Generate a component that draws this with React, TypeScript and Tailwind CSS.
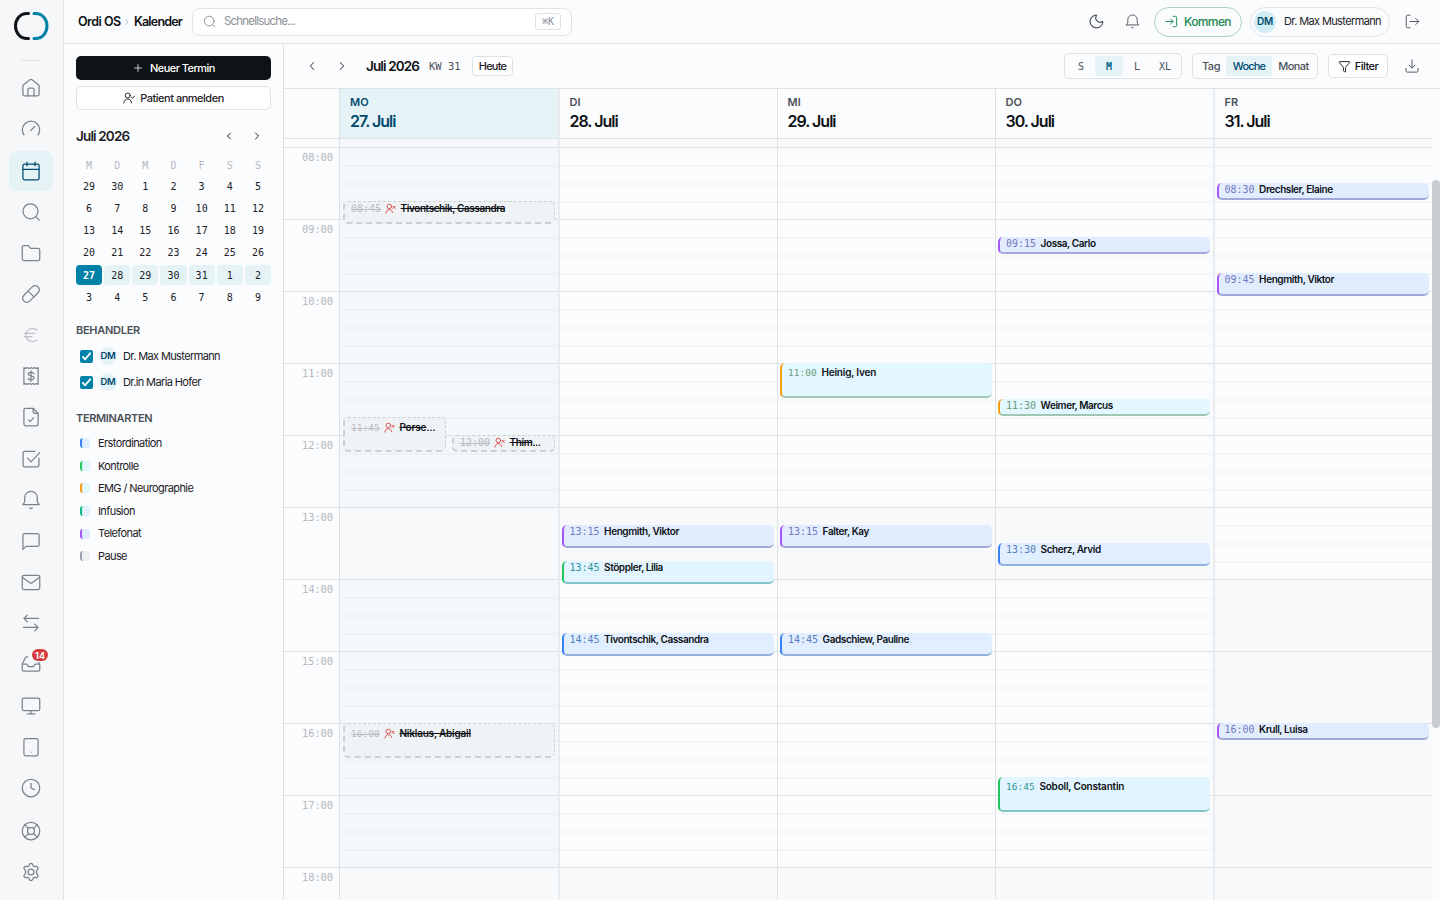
import React from "react";
import { Pill, Euro, Moon, ChevronLeft, ChevronRight, Plus, Funnel } from "lucide-react";

type IconProps = { className?: string; size?: number; strokeWidth?: number };

const Svg = ({ size = 20, strokeWidth = 1.5, className = "", children }: IconProps & { children: React.ReactNode }) => (
  <svg width={size} height={size} viewBox="0 0 24 24" fill="none" stroke="currentColor" strokeWidth={strokeWidth} strokeLinecap="round" strokeLinejoin="round" className={className}>{children}</svg>
);
const HomeI = () => <Svg><path d="M2.3 9.6v9.9c0 1.300.8 2 2 2h15.400c1.200 0 2-.7 2-2V9.600c0-.6-.3-1.200-.8-1.600l-7.600-5.800a2.200 2.200 0 0 0-2.600 0L3.100 8c-.5.400-.8 1-.8 1.600z" /><path d="M8.300 21.500v-7.800c0-1 .7-1.700 1.700-1.700h4c1 0 1.700.7 1.700 1.700v7.800" /></Svg>;
const GaugeI = () => <Svg><path d="M3.500 19A10.400 10.400 0 0 1 1.600 13a10.400 10.400 0 0 1 20.800 0 10.400 10.400 0 0 1-1.900 6" /><path d="m11.500 14 5-5" /></Svg>;
const CalI = () => <Svg><rect x="2.300" y="3.800" width="19.400" height="18.700" rx="2" /><path d="M2.300 10h19.400M7.200 1.400v4.400M16.800 1.400v4.400" /></Svg>;
const SearchI = (p: IconProps) => <Svg {...p}><circle cx="11.400" cy="11.200" r="9" /><path d="m17.800 17.800 4.200 4" /></Svg>;
const FolderI = () => <Svg><path d="M1.500 19V5c0-1.200.8-2 2-2h5l3 3.500h9c1.200 0 2 .8 2 2V19c0 1.200-.8 2-2 2h-17c-1.200 0-2-.8-2-2z" /></Svg>;
const ReceiptI = () => <Svg><path d="M3.500 2v20l2-1 2 1 2.200-1 2.300 1 2.300-1 2.200 1 2-1 2 1V2l-2 1-2-1-2.200 1L12 2 9.700 3 7.500 2l-2 1z" /><path d="M15.500 9.300c-.3-1.200-1.400-1.800-3.500-1.800-2.300 0-3.500.8-3.500 2.200 0 3.300 7 1.200 7 4.600 0 1.400-1.200 2.200-3.500 2.200-2.100 0-3.200-.6-3.500-1.800M12 5.500v13" /></Svg>;
const FileI = () => <Svg><path d="M14.500 1.500h-9c-1.200 0-2 .8-2 2v17c0 1.200.8 2 2 2h13c1.200 0 2-.8 2-2v-13zM14.500 1.500v4c0 1.200.8 2 2 2h4" /><path d="m9 15.500 2 2 4-4.500" /></Svg>;
const CheckI = () => <Svg><path d="M17 2.800H4.500c-1.200 0-2 .8-2 2v14.700c0 1.200.8 2 2 2h15c1.200 0 2-.8 2-2V11" /><path d="m8 11 4 4.500L22.500 4.300" /></Svg>;
const BellI = (p: IconProps) => <Svg {...p}><path d="M2.200 17.500h19.600c-1.400-1.200-2.300-2.600-2.300-4.500V9a7.500 7.500 0 0 0-15 0v4c0 1.900-.9 3.300-2.300 4.500zM10.400 21.500c.8.800 2.400.8 3.200 0" /></Svg>;
const ChatI = () => <Svg><path d="M2.300 22V5c0-1.200.8-2 2-2h15.400c1.200 0 2 .8 2 2v11.500c0 1.200-.8 2-2 2H6z" /></Svg>;
const MailI = () => <Svg><rect x="1.500" y="4" width="21" height="17" rx="2" /><path d="m2 6.500 8.700 6.300c.8.600 1.800.6 2.600 0L22 6.500" /></Svg>;
const ArrowsI = () => <Svg><path d="M21 6.500H3.500M7.500 2.500l-4 4 4 4M3 17.300h17.500M16.500 13.300l4 4-4 4" /></Svg>;
const InboxI = () => <Svg><path d="M8 3.500H7a2 2 0 0 0-1.900 1.300L1.500 12v6.500c0 1.200.8 2 2 2h17c1.200 0 2-.8 2-2V12H17l-2 3.200H9L7 12H1.500M20 8l2.500 4" /></Svg>;
const MonitorI = () => <Svg><rect x="1.500" y="2.500" width="21" height="15" rx="1.800" /><path d="M12 17.500v4M7.500 21.500h9" /></Svg>;
const TabletI = () => <Svg><rect x="3.500" y="1.800" width="17" height="20.700" rx="2" /><path d="M12 18v.01" /></Svg>;
const ClockI = () => <Svg><circle cx="12" cy="12" r="10.500" /><path d="M12 6.500V12l4 2" /></Svg>;
const LifeI = () => <Svg><circle cx="12" cy="12" r="10.500" /><rect x="8" y="8" width="8" height="8" rx="3" /><path d="m4.600 4.600 4.300 4.300M19.400 4.600l-4.300 4.300M4.600 19.400l4.300-4.300M19.400 19.400l-4.300-4.300" /></Svg>;
const GearI = () => <Svg><path d="M10.100 2.900c.6-1.600 3.200-1.600 3.800 0l.7 1.700c.3.700 1 1.100 1.700 1l1.900-.3c1.700-.2 3 2 1.900 3.300l-1.200 1.500c-.5.600-.5 1.300-.5 1.900s0 1.300.5 1.900l1.200 1.500c1.100 1.300-.2 3.500-1.900 3.300l-1.900-.3c-.7-.1-1.400.3-1.700 1l-.7 1.700c-.6 1.600-3.200 1.600-3.800 0l-.7-1.700c-.3-.7-1-1.100-1.700-1l-1.900.3c-1.700.2-3-2-1.900-3.300l1.200-1.500c.5-.6.500-1.300.5-1.900s0-1.300-.5-1.900L3.900 8.600c-1.100-1.300.2-3.500 1.900-3.300l1.900.3c.7.100 1.400-.3 1.700-1z" /><circle cx="12" cy="12" r="3.500" /></Svg>;
const PersonX = ({ size = 11 }: { size?: number }) => <Svg size={size} strokeWidth={2}><circle cx="9.500" cy="7.500" r="5" /><path d="M2 22c.4-4.500 3.300-7.500 7.500-7.500 4 0 6.700 2.500 7.300 6.500M17.500 7l5 5M22.500 7l-5 5" /></Svg>;
const PersonCheck = () => <Svg size={12} strokeWidth={1.9}><circle cx="9.500" cy="7" r="5" /><path d="M1.500 22c.4-4.500 3.600-8 8-8 4.200 0 7 3 7.700 7.500M17 10.500l2 1.800 4-4.500" /></Svg>;

const nav: React.ReactNode[] = [<HomeI />, <GaugeI />, <CalI />, <SearchI />, <FolderI />, <Pill size={20} strokeWidth={1.5} />, <Euro size={20} strokeWidth={1.5} />, <ReceiptI />, <FileI />, <CheckI />, <BellI />, <ChatI />, <MailI />, <ArrowsI />, <InboxI />, <MonitorI />, <TabletI />, <ClockI />];

function Rail() {
  return (
    <nav className="flex w-16 shrink-0 flex-col items-center border-r border-[#dfe2e5] bg-[#f6f7f9] pr-px text-[#7d828a]">
      <svg width="36" height="30" viewBox="0 0 36 30" fill="none" strokeWidth="3" strokeLinecap="round" className="mt-[11px]">
        <path d="M15.500 2.500H14C7 2.500 2.500 8.500 2.500 15s4.500 12.500 11.500 12.500h1.500" stroke="#0f1216" />
        <path d="M21 2.500h1.500c7 0 11.500 6 11.500 12.500s-4.500 12.500-11.500 12.500H21" stroke="#0081a7" />
      </svg>
      <div className="mt-[19px] h-px w-5 bg-[#dfe2e5]" />
      <div className="mt-[7.200px] flex flex-col gap-[1.160px]">
        {nav.map((icon, i) => (
          <div key={i} className={`relative flex h-10 w-11 items-center justify-center rounded-lg ${i === 2 ? "bg-[#e5f3f7] text-[#004a6e]" : ""} ${i === 6 ? "opacity-45" : ""}`}>
            {icon}
            {i === 14 && <span className="absolute left-[23px] top-[5px] flex h-3 w-4 items-center justify-center rounded-full bg-[#d63b3f] text-[9px] font-bold text-white ring-1 ring-[#f6f7f9]">14</span>}
          </div>
        ))}
      </div>
      <div className="mt-[3px] flex flex-col gap-px">
        <div className="flex h-10 w-11 items-center justify-center"><LifeI /></div>
        <div className="flex h-10 w-11 items-center justify-center"><GearI /></div>
      </div>
    </nav>
  );
}

function Header() {
  return (
    <header className="flex h-11 shrink-0 items-center border-b border-[#dfe2e5] pl-3.5 pr-5">
      <span className="w-[40px] whitespace-nowrap pt-px text-[12.500px] font-semibold tracking-[-0.5px]">Ordi OS</span>
      <ChevronRight size={10} className="ml-[4px] text-[#a4a8ad]" strokeWidth={2} />
      <span className="ml-[2px] w-[58px] pt-px text-[12.500px] font-semibold tracking-[-0.8px]">Kalender</span>
      <div className="flex h-7 w-[380px] items-center rounded-lg border border-[#e1e4e7] bg-white pl-[10px] pr-2.5 text-[#8c9198]">
        <SearchI size={13} strokeWidth={1.8} />
        <span className="ml-2 flex-1 text-[11.500px] tracking-[-0.8px]">Schnellsuche...</span>
        <span className="flex h-[17px] w-[26px] items-center justify-center rounded-[3px] border border-[#dfe2e5] font-['DejaVu_Sans_Mono',monospace] text-[10px]">⌘K</span>
      </div>
      <div className="ml-auto flex items-center text-[#4c5158]">
        <Moon size={17} strokeWidth={1.6} />
        <span className="ml-[20px] flex"><BellI size={15} /></span>
        <button className="ml-[14px] flex h-[30px] w-[88px] items-center justify-center gap-1.5 rounded-full border border-[#a9d5be] text-[12px] font-medium tracking-[-0.6px] text-[#1c8a50]">
          <Svg size={13} strokeWidth={1.8}><path d="M2 12h13M10.500 7.500 15 12l-4.500 4.500M15.500 2.500h4c1.200 0 2 .8 2 2v15c0 1.200-.8 2-2 2h-4" /></Svg>
          <span className="pt-px">Kommen</span>
        </button>
        <div className="ml-2 flex h-[30px] w-[140px] items-center rounded-full border border-[#e3e6e9] pl-[3px]">
          <span className="flex h-[22px] w-[22px] items-center justify-center rounded-full bg-[#d3edf5] text-[10px] font-semibold tracking-[-0.2px] text-[#004a6e]">DM</span>
          <span className="ml-2 whitespace-nowrap text-[11px] tracking-[-0.620px] text-[#1d2126]">Dr. Max Mustermann</span>
        </div>
        <Svg size={15} className="ml-[15px]"><path d="M8 2H4c-1.200 0-2 .8-2 2v16c0 1.200.8 2 2 2h4M8 12h14M17 7l5 5-5 5" /></Svg>
      </div>
    </header>
  );
}

const days = [29, 30, 1, 2, 3, 4, 5, 6, 7, 8, 9, 10, 11, 12, 13, 14, 15, 16, 17, 18, 19, 20, 21, 22, 23, 24, 25, 26, 27, 28, 29, 30, 31, 1, 2, 3, 4, 5, 6, 7, 8, 9];
const kinds = [
  ["Erstordination", "border-[#3b82f6] bg-[#e1eeff]"],
  ["Kontrolle", "border-[#22c55e] bg-[#e1f5fe]"],
  ["EMG / Neurographie", "border-[#f59e0b] bg-[#e1f7ff]"],
  ["Infusion", "border-[#10b981] bg-[#e1f2fe]"],
  ["Telefonat", "border-[#a855f7] bg-[#e1edff]"],
  ["Pause", "border-[#9ca3af] bg-[#eef1f4]"],
];

function Panel() {
  return (
    <aside className="flex w-[220px] shrink-0 flex-col border-r border-[#dfe2e5] px-3 pt-3 text-[#1d2126]">
      <button className="flex h-6 items-center justify-center gap-1.5 rounded-[5px] bg-[#0f1216] text-[11px] font-medium tracking-[-0.550px] text-white"><Plus size={12} strokeWidth={1.5} />Neuer Termin</button>
      <button className="mt-1.5 flex h-6 items-center justify-center gap-[5px] rounded-[5px] border border-[#dfe2e5] bg-white text-[11px] font-medium tracking-[-0.480px]"><PersonCheck />Patient anmelden</button>
      <div className="mt-[18px] flex h-4 items-center">
        <span className="flex-1 pt-px text-[13.500px] font-semibold tracking-[-0.850px]">Juli 2026</span>
        <ChevronLeft size={12} /><ChevronRight size={12} className="ml-[16px] mr-[8px]" />
      </div>
      <div className="mt-[14.200px] grid grid-cols-7 gap-x-[2px] text-center font-['DejaVu_Sans_Mono',monospace] text-[10px]">
        {["M", "D", "M", "D", "F", "S", "S"].map((d, i) => <span key={i} className="mb-[4px] h-[14px] leading-[15px] text-[#b4b8bd]">{d}</span>)}
        {days.map((d, i) => (
          <span key={i} className={`mb-[2.250px] flex h-5 items-center justify-center rounded-[4px] ${i === 28 ? "bg-[#0081a7] font-bold text-white" : i > 28 && i < 35 ? "bg-[#e5f3f7]" : ""}`}>{d}</span>
        ))}
      </div>
      <h3 className="mt-[12.500px] text-[11px] font-semibold leading-4 tracking-[-0.280px] text-[#4c5158]">BEHANDLER</h3>
      <div className="mt-[5px] flex flex-col">
        {["Dr. Max Mustermann", "Dr.in Maria Hofer"].map((n) => (
          <label key={n} className="flex h-[26px] items-center pl-1 text-[11px] tracking-[-0.620px]">
            <span className="flex h-[13px] w-[13px] items-center justify-center rounded-[2px] bg-[#0081a7] text-white"><Svg size={11} strokeWidth={4}><path d="m4 13 5 5L20 5" /></Svg></span>
            <span className="ml-1.5 flex h-[18px] w-[18px] items-center justify-center rounded-full bg-[#e5f3f7] text-[9.500px] font-semibold tracking-[-0.2px] text-[#004a6e]">DM</span>
            <span className="ml-1.5">{n}</span>
          </label>
        ))}
      </div>
      <h3 className="mt-[15px] text-[11px] font-semibold leading-4 tracking-[-0.350px] text-[#4c5158]">TERMINARTEN</h3>
      <div className="mt-[5.700px] flex flex-col">
        {kinds.map(([n, c]) => (
          <div key={n} className="flex h-[22.600px] items-center pl-1 text-[11px] tracking-[-0.6px]">
            <span className={`h-2.5 w-2.5 rounded-[3px] border-l-2 ${c}`} /><span className="ml-2">{n}</span>
          </div>
        ))}
      </div>
    </aside>
  );
}

function Toolbar() {
  return (
    <div className="flex h-[45px] shrink-0 items-center border-b border-[#dfe2e5] px-[21px] text-[#4c5158]">
      <ChevronLeft size={14} strokeWidth={1.8} />
      <ChevronRight size={14} strokeWidth={1.8} className="ml-[16px]" />
      <span className="ml-[17px] w-[63px] whitespace-nowrap text-[13.500px] font-semibold tracking-[-0.880px] text-[#0f1216]">Juli 2026</span>
      <span className="w-[43px] whitespace-nowrap pt-px font-['DejaVu_Sans_Mono',monospace] text-[10.500px]">KW 31</span>
      <button className="h-5 w-[41px] rounded border border-[#dfe2e5] bg-white text-[11px] font-medium leading-none tracking-[-0.8px] text-[#1d2126]">Heute</button>
      <div className="ml-auto flex h-[26px] w-[118px] items-center rounded-[5px] border border-[#dfe2e5] px-[2px] font-['DejaVu_Sans_Mono',monospace] text-[10px]">
        {["S", "M", "L", "XL"].map((s) => <span key={s} className={`flex h-5 w-7 items-center justify-center rounded-[3px] ${s === "M" ? "bg-[#e5f3f7] font-bold text-[#00628a]" : ""}`}>{s}</span>)}
      </div>
      <div className="ml-2.5 flex h-[26px] w-[126px] items-center rounded-[5px] border border-[#dfe2e5] pl-[3px] text-[11px] font-medium tracking-[-0.6px]">
        <span className="w-[30px] text-center tracking-[-0.4px]">Tag</span>
        <span className="flex h-5 w-[46px] items-center justify-center rounded-[3px] bg-[#e5f3f7] tracking-[-0.8px] text-[#004a6e]">Woche</span>
        <span className="w-[43px] text-center">Monat</span>
      </div>
      <button className="ml-2.5 flex h-6 w-[60px] items-center justify-center gap-1 rounded-[5px] border border-[#dfe2e5] bg-white text-[11px] font-medium tracking-[-0.5px] text-[#0f1216]"><Funnel size={13} strokeWidth={1.7} />Filter</button>
      <Svg size={14} strokeWidth={1.6} className="ml-[17px]"><path d="M12 1.500V15M7 10.500l5 5 5-5M1.800 16v4.500c0 1.200.8 2 2 2h16.400c1.200 0 2-.8 2-2V16" /></Svg>
    </div>
  );
}

type Tone = "violet" | "green" | "orange" | "blue" | "off";
type Ev = { y: number; h: number; t: string; n: string; c: Tone; x?: number; w?: number };
const tones: Record<Tone, [string, string]> = {
  violet: ["border-l-[#a855f7] border-b-[#a3a8db] bg-[#e1edff]", "text-[#7478bd]"],
  green: ["border-l-[#22c55e] border-b-[#83c3ca] bg-[#e1f4ff]", "text-[#2f9697]"],
  orange: ["border-l-[#f59e0b] border-b-[#a0c6b4] bg-[#e2f7ff]", "text-[#6e9c78]"],
  blue: ["border-l-[#3b82f6] border-b-[#90b1da] bg-[#e1eeff]", "text-[#5480bd]"],
  off: ["", "text-[#babdc1] line-through"],
};
const cols: { d: string; n: string; w: string; ev: Ev[] }[] = [
  { d: "MO", n: "27. Juli", w: "w-[220px] border-r-2 border-[#e9ecef]", ev: [
    { y: 201, h: 23, t: "08:45", n: "Tivontschik, Cassandra", c: "off" },
    { y: 417, h: 35, t: "11:45", n: "Porse...", c: "off", w: 103 },
    { y: 435, h: 17, t: "12:00", n: "Thim...", c: "off", x: 112, w: 103.4 },
    { y: 723, h: 35, t: "16:00", n: "Niklaus, Abigail", c: "off" },
  ] },
  { d: "DI", n: "28. Juli", w: "w-[218px] border-r border-[#dfe2e5]", ev: [
    { y: 525, h: 23, t: "13:15", n: "Hengmith, Viktor", c: "violet" },
    { y: 561, h: 23, t: "13:45", n: "Stöppler, Lilia", c: "green" },
    { y: 633, h: 23, t: "14:45", n: "Tivontschik, Cassandra", c: "blue" },
  ] },
  { d: "MI", n: "29. Juli", w: "w-[218px] border-r border-[#dfe2e5]", ev: [
    { y: 363, h: 35, t: "11:00", n: "Heinig, Iven", c: "orange" },
    { y: 525, h: 23, t: "13:15", n: "Falter, Kay", c: "violet" },
    { y: 633, h: 23, t: "14:45", n: "Gadschiew, Pauline", c: "blue" },
  ] },
  { d: "DO", n: "30. Juli", w: "w-[219px] border-r-2 border-[#e9ecef]", ev: [
    { y: 237, h: 17, t: "09:15", n: "Jossa, Carlo", c: "violet" },
    { y: 399, h: 17, t: "11:30", n: "Weimer, Marcus", c: "orange" },
    { y: 543, h: 23, t: "13:30", n: "Scherz, Arvid", c: "blue" },
    { y: 777, h: 35, t: "16:45", n: "Soboll, Constantin", c: "green" },
  ] },
  { d: "FR", n: "31. Juli", w: "w-[217px]", ev: [
    { y: 183, h: 17, t: "08:30", n: "Drechsler, Elaine", c: "violet" },
    { y: 273, h: 23, t: "09:45", n: "Hengmith, Viktor", c: "violet" },
    { y: 723, h: 17, t: "16:00", n: "Krull, Luisa", c: "violet" },
  ] },
];
const hours = [8, 9, 10, 11, 12, 13, 14, 15, 16, 17, 18];
const isClosed = (col: number, h: number) => h >= 18 || (col === 4 ? h >= 14 : h === 13);

function Event({ e, col }: { e: Ev; col: number }) {
  const off = e.c === "off";
  const tall = e.h > 30;
  const cut = e.n.endsWith("...");
  const left = e.x ?? (col === 0 ? 3 : col === 1 || col === 4 ? 1.5 : 2);
  return (
    <div
      className={`absolute flex items-start overflow-hidden whitespace-nowrap rounded-[5px] pl-1.5 ${tall ? "pt-[3px]" : ""} ${off ? "border border-b-2 border-l-2 border-dashed border-[#cdd0d3] bg-[#f0f3f5]" : "border-b-2 border-l-2 border-solid"} ${tones[e.c][0]}`}
      style={{ top: e.y - 139, left, width: e.w ?? 212.4, height: e.h }}
    >
      <span className={`font-['DejaVu_Sans_Mono',monospace] leading-[13px] ${tall ? "text-[9.500px]" : "text-[10px]"} ${tones[e.c][1]}`}>{e.t}</span>
      {off && <span className="ml-1 mt-px text-[#d9484c]"><PersonX /></span>}
      <span className={`text-[10px] font-semibold leading-[13px] text-[#0f1216] ${tall ? "ml-[4.800px] tracking-[-0.2px]" : "ml-[4.500px] tracking-[-0.420px]"}`}>
        <span className={off ? "line-through" : ""}>{cut ? e.n.slice(0, -3) : e.n}</span>{cut && "..."}
      </span>
    </div>
  );
}

function Week() {
  return (
    <div className="flex min-h-0 flex-1">
      <div className="flex w-14 shrink-0 flex-col border-r border-[#dfe2e5]">
        <div className="h-[50px] shrink-0 border-b border-[#dfe2e5]" />
        <div className="h-[9px] shrink-0 border-b border-[#dfe2e5]" />
        {hours.map((h) => <div key={h} className="h-[72px] shrink-0 border-b border-[#dfe2e5] pr-[6px] pt-[2px] text-right font-['DejaVu_Sans_Mono',monospace] text-[10.300px] leading-[15px] text-[#b4b8bd]">{String(h).padStart(2, "0")}:00</div>)}
      </div>
      {cols.map((c, ci) => (
        <section key={c.d} className={`flex shrink-0 flex-col ${c.w}`}>
          <div className={`h-[50px] shrink-0 border-b border-[#dfe2e5] pt-[6px] ${ci === 0 ? "bg-[#e5f3f7] pl-[10px] text-[#004a6e]" : "pl-[9.500px] text-[#0f1216]"}`}>
            <div className={`text-[11px] font-semibold leading-[15px] ${ci === 0 ? "" : "text-[#4c5158]"}`}>{c.d}</div>
            <div className="mt-px text-[16px] font-semibold leading-5 tracking-[-1px]">{c.n}</div>
          </div>
          <div className="relative min-h-0 flex-1">
            <div className={`h-[9px] border-b border-[#dfe2e5] ${ci === 0 ? "bg-[#f6f8fa]" : "bg-[#f8f9fb]"}`} />
            {hours.map((h) => (
              <div key={h} className={`flex h-[72px] flex-col border-b border-[#dfe2e5] ${isClosed(ci, h) ? "bg-[#f8f9fb]" : ci === 0 ? "bg-[#f3f8fb]" : ""}`}>
                {!isClosed(ci, h) && [0, 1, 2].map((q) => <div key={q} className={`shrink-0 border-b-2 ${q === 0 ? "h-[19px]" : "h-[18px]"} ${ci === 0 ? "border-[#edf2f5]" : "border-[#f5f6f8]"}`} />)}
              </div>
            ))}
            {c.ev.map((e) => <Event key={e.t + e.n} e={e} col={ci} />)}
          </div>
        </section>
      ))}
      <div className="w-2 shrink-0 pt-[91px]"><div className="h-[548px] rounded-full bg-[#c9ccd1]" /></div>
    </div>
  );
}

export default function App() {
  return (
    <div className="flex h-[900px] w-[1440px] overflow-hidden bg-[#fbfcfe] font-['Inter',sans-serif] text-[#0f1216]">
      <Rail />
      <div className="flex min-w-0 flex-1 flex-col">
        <Header />
        <div className="flex min-h-0 flex-1">
          <Panel />
          <main className="flex min-w-0 flex-1 flex-col overflow-hidden"><Toolbar /><Week /></main>
        </div>
      </div>
    </div>
  );
}
